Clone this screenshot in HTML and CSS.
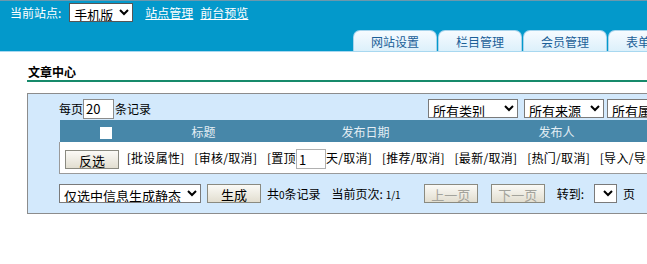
FILE: index.html
```html
<!DOCTYPE html>
<html lang="zh-CN">
<head>
    <meta charset="UTF-8">
    <title>文章中心</title>
    <link rel="stylesheet" href="styles.css">
</head>
<body>
    <div class="topbar">
        <div class="site-row">
            <span class="site-label">当前站点:</span>
            <select class="site-select"><option>手机版</option></select>
            <a href="#" class="top-link">站点管理</a>
            <a href="#" class="top-link">前台预览</a>
        </div>
        <ul class="tabs">
            <li>网站设置</li>
            <li>栏目管理</li>
            <li>会员管理</li>
            <li>表单管理</li>
        </ul>
    </div>

    <div class="page">
        <h2 class="title">文章中心</h2>
        <div class="panel">
            <div class="toolbar">
                <div class="per-page">每页<input class="num-input" type="text" value="20">条记录</div>
                <div class="filters">
                    <select class="sel-type"><option>所有类别</option></select>
                    <select class="sel-source"><option>所有来源</option></select>
                    <select class="sel-attr"><option>所有属性</option></select>
                </div>
            </div>
            <table class="list">
                <thead>
                    <tr>
                        <th class="col-check"><span class="checkbox"></span></th>
                        <th class="col-title">标题</th>
                        <th class="col-date">发布日期</th>
                        <th class="col-user">发布人</th>
                        <th class="col-op">操作</th>
                    </tr>
                </thead>
                <tbody>
                    <tr>
                        <td colspan="5" class="actions">
                            <button class="btn">反选</button>
                            <span class="act">[批设属性]</span>
                            <span class="act">[审核/取消]</span>
                            <span class="act">[置顶<input class="day-input" type="text" value="1">天/取消]</span>
                            <span class="act">[推荐/取消]</span>
                            <span class="act">[最新/取消]</span>
                            <span class="act">[热门/取消]</span>
                            <span class="act">[导入/导出]</span>
                        </td>
                    </tr>
                </tbody>
            </table>
            <div class="pager">
                <select class="sel-static"><option>仅选中信息生成静态</option></select>
                <button class="btn">生成</button>
                <span class="total">共<small>0</small>条记录</span>
                <span class="current">当前页次: <small>1/1</small></span>
                <button class="btn disabled prev">上一页</button>
                <button class="btn disabled">下一页</button>
                <span class="goto">转到:</span>
                <select class="sel-page"></select>
                <span>页</span>
            </div>
        </div>
    </div>
</body>
</html>
```

FILE: styles.css
```css
html, body {
    overflow: hidden;
}
body {
    margin: 0;
    font-family: "Noto Sans CJK SC", sans-serif;
    font-size: 12px;
    color: #000;
    background: #fff;
}
select, input, button {
    font-family: "Noto Sans CJK SC", sans-serif;
    font-size: 12px;
}

/* top bar */
.topbar {
    height: 50px;
    background-color: #0399cb;
    border-top: 1px solid #6c98ad;
    border-bottom: 1px solid #a8d8f0;
    display: flex;
    flex-direction: column;
    justify-content: space-between;
}
.site-row {
    display: flex;
    align-items: center;
    padding: 2px 0 0 10px;
    height: 19px;
    color: #fff;
    white-space: nowrap;
}
.site-select {
    margin-left: 8px;
    width: 64px;
    height: 19px;
    border: 1px solid #555;
    border-radius: 0;
    background: #fff;
    font-size: 13px;
    padding: 0;
}
.top-link {
    color: #fff;
    margin-left: 12px;
}
.top-link + .top-link {
    margin-left: 7px;
}
.tabs {
    list-style: none;
    margin: 0 0 0 353px;
    padding: 0;
    display: flex;
    gap: 1px;
    white-space: nowrap;
}
.tabs li {
    flex-shrink: 0;
    width: 82px;
    height: 20px;
    line-height: 21px;
    text-align: center;
    color: #1b5f98;
    border: 1px solid #a6d4ec;
    border-bottom: none;
    border-radius: 7px 7px 0 0;
    background: linear-gradient(#f6fbff, #dcf0fb);
}

/* content */
.page {
    padding-left: 27px;
}
.title {
    margin: 0;
    padding: 11px 0 0 1px;
    height: 17px;
    line-height: 17px;
    font-size: 12px;
    font-weight: bold;
    border-bottom: 2px solid #168a6b;
}
.panel {
    margin-top: 11px;
    width: 700px;
    border: 1px solid #8c8c8c;
    background-color: #d3e9fc;
    padding: 4px 0 10px 31px;
}
.toolbar {
    width: 628px;
    height: 21px;
    display: flex;
    align-items: center;
    justify-content: space-between;
    white-space: nowrap;
}
.per-page {
    display: flex;
    align-items: center;
}
.num-input {
    width: 27px;
    height: 18px;
    margin: 0 1px 0 0;
    padding: 0 0 0 2px;
    border: 1px solid #8c8c8c;
    font-size: 13px;
}
.filters {
    display: flex;
    align-items: center;
}
.filters select, .pager select {
    height: 19px;
    border: 1px solid #7a7a7a;
    border-radius: 0;
    background: #fff;
    padding: 0;
    font-size: 13px;
}
.sel-type { width: 90px; }
.sel-source { width: 80px; margin-left: 6px; }
.sel-attr { width: 80px; margin-left: 3px; }

.list {
    width: 628px;
    margin-top: 1px;
    border-collapse: collapse;
    table-layout: fixed;
}
.list th {
    height: 22px;
    padding: 0;
    background-color: #4787a9;
    color: #e4eef4;
    font-weight: normal;
    text-align: center;
    font-size: 12px;
}
.col-check { width: 92px; }
.col-title { width: 104px; }
.col-date { width: 220px; }
.col-user { width: 162px; }
.checkbox {
    display: inline-block;
    width: 12px;
    height: 12px;
    background: #fff;
    vertical-align: middle;
}
.actions {
    height: 22px;
    padding: 6px 0 3px 5px;
    background: #fff;
    border: 1px solid #9a9a9a;
    border-top: none;
    white-space: nowrap;
}
.act {
    margin-left: 7px;
    letter-spacing: 0.3px;
}
.act:first-of-type {
    margin-left: 5px;
}
.day-input {
    width: 26px;
    height: 18px;
    padding: 0 0 0 2px;
    border: 1px solid #b0b0b0;
    font-size: 13px;
    vertical-align: middle;
}
.btn {
    height: 19px;
    width: 54px;
    padding: 0;
    border: 1px solid #8a8a80;
    border-radius: 0;
    background: linear-gradient(#fbfaf6, #e2ded0);
    color: #000;
    font-size: 13px;
    vertical-align: middle;
}
.btn.disabled {
    color: #a3a39c;
}
.pager {
    margin-top: 10px;
    display: flex;
    align-items: center;
    white-space: nowrap;
}
.sel-static { width: 142px; }
.pager .btn { margin-left: 6px; }
.total { margin-left: 6px; }
.current { margin-left: 11px; }
.pager small {
    font-size: 10px;
}
.pager .disabled { margin-left: 13px; }
.pager .prev { margin-left: 23px; }
.goto { margin-left: 12px; }
.sel-page { width: 23px; margin: 0 6px 0 10px; }
```
